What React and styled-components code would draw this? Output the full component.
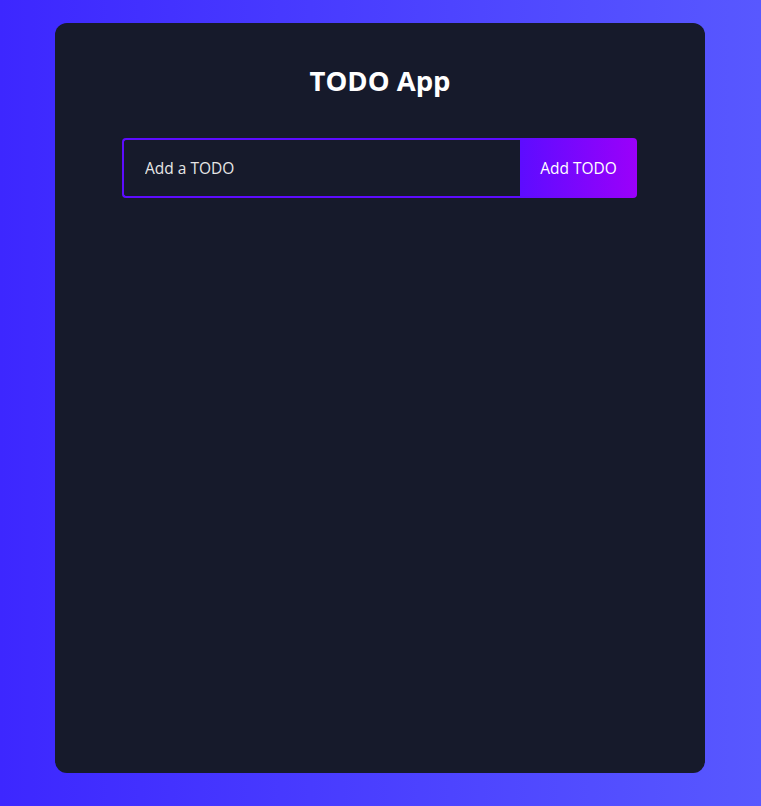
import React, { useState } from 'react';
import styled, { createGlobalStyle } from 'styled-components';

const GlobalStyle = createGlobalStyle`
    * {
        box-sizing: border-box;
    }
    body {
        margin: 0;
        font-family: "Open Sans", "Noto Sans", sans-serif;
        background: linear-gradient(90deg, #3d27ff 0%, #5858ff 100%);
        min-height: 806px;
    }
`;

const Page = styled.div`
    display: flex;
    padding: 23px 56px 0 55px;
`;

const TodoCard = styled.div`
    width: 650px;
    height: 750px;
    background-color: #161a2b;
    border-radius: 12px;
    display: flex;
    flex-direction: column;
    align-items: center;
`;

const Title = styled.h1`
    margin: 0;
    padding-top: 39px;
    color: #fff;
    font-size: 27.5px;
    font-weight: 700;
    line-height: 38px;
`;

const TodoForm = styled.form`
    display: flex;
    align-self: flex-start;
    margin: 38px 0 0 67px;
    width: 515px;
    height: 60px;
`;

const TodoInput = styled.input`
    flex: 1;
    padding: 0 21px;
    border: 2px solid #5d0cff;
    border-right: none;
    border-radius: 4px 0 0 4px;
    background: transparent;
    color: #fff;
    font-family: inherit;
    font-size: 15.5px;
    outline: none;
    &::placeholder {
        color: #e6e6e6;
        opacity: 1;
    }
`;

const TodoButton = styled.button`
    width: 117px;
    border: none;
    border-radius: 0 4px 4px 0;
    background: linear-gradient(90deg, #5d0cff 0%, #9b00fa 100%);
    color: #fff;
    font-family: inherit;
    font-size: 15.5px;
    cursor: pointer;
`;

export default function App() {
    const [input, setInput] = useState('');

    const handleSubmit = (e) => {
        e.preventDefault();
        setInput('');
    }

    return (
        <>
            <GlobalStyle />
            <Page>
                <TodoCard>
                    <Title>TODO App</Title>
                    <TodoForm onSubmit={handleSubmit}>
                        <TodoInput
                            placeholder="Add a TODO"
                            value={input}
                            onChange={e => setInput(e.target.value)}
                        />
                        <TodoButton>Add TODO</TodoButton>
                    </TodoForm>
                </TodoCard>
            </Page>
        </>
    );
}
